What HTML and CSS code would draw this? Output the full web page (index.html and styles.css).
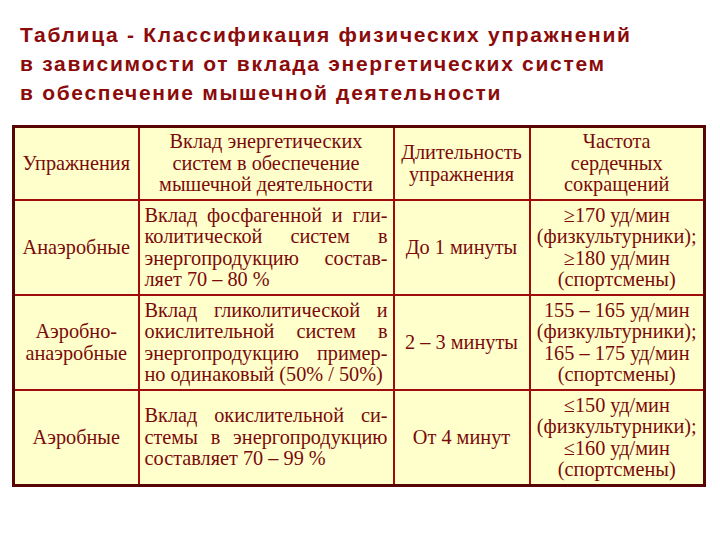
FILE: index.html
```html
<!DOCTYPE html>
<html lang="ru">
<head>
<meta charset="utf-8">
<link rel="stylesheet" href="styles.css">
</head>
<body>
<h1 class="title">Таблица - Классификация физических упражнений<br>в зависимости от вклада энергетических систем<br>в обеспечение мышечной деятельности</h1>
<table class="grid">
  <colgroup>
    <col class="c1"><col class="c2"><col class="c3"><col class="c4">
  </colgroup>
  <tr class="head">
    <td class="center">Упражнения</td>
    <td class="center">Вклад энергетических<br>систем в обеспечение<br>мышечной деятельности</td>
    <td class="center">Длительность<br>упражнения</td>
    <td class="center">Частота<br>сердечных<br>сокращений</td>
  </tr>
  <tr class="row">
    <td class="center">Анаэробные</td>
    <td class="just">
      <div class="ln">Вклад фосфагенной и гли-</div>
      <div class="ln">колитической систем в</div>
      <div class="ln">энергопродукцию состав-</div>
      <div class="ln last">ляет 70 – 80 %</div>
    </td>
    <td class="center">До 1 минуты</td>
    <td class="center">≥170 уд/мин<br>(физкультурники);<br>≥180 уд/мин<br>(спортсмены)</td>
  </tr>
  <tr class="row">
    <td class="center">Аэробно-<br>анаэробные</td>
    <td class="just">
      <div class="ln">Вклад гликолитической и</div>
      <div class="ln">окислительной систем в</div>
      <div class="ln">энергопродукцию пример-</div>
      <div class="ln last">но одинаковый (50% / 50%)</div>
    </td>
    <td class="center">2 – 3 минуты</td>
    <td class="center">155 – 165 уд/мин<br>(физкультурники);<br>165 – 175 уд/мин<br>(спортсмены)</td>
  </tr>
  <tr class="row">
    <td class="center">Аэробные</td>
    <td class="just">
      <div class="ln">Вклад окислительной си-</div>
      <div class="ln">стемы в энергопродукцию</div>
      <div class="ln last">составляет 70 – 99 %</div>
    </td>
    <td class="center">От 4 минут</td>
    <td class="center">≤150 уд/мин<br>(физкультурники);<br>≤160 уд/мин<br>(спортсмены)</td>
  </tr>
</table>
</body>
</html>
```
FILE: styles.css
```css
html, body {
  margin: 0;
  padding: 0;
  background: #ffffff;
}
body {
  width: 720px;
  height: 540px;
  overflow: hidden;
}
.title {
  margin: 0;
  padding: 20px 0 0 20px;
  font-family: "Liberation Sans", Arial, sans-serif;
  font-weight: bold;
  font-size: 21px;
  letter-spacing: 1.7px;
  line-height: 29px;
  color: #8b0a0a;
  height: 104px;
  box-sizing: border-box;
  white-space: nowrap;
}
.grid {
  margin: 21px 0 0 12px;
  border-collapse: collapse;
  table-layout: fixed;
  width: 691px;
  background: #ffffcc;
  border: 3px solid #5a0505;
  color: #7a0a0a;
}
.grid td {
  font-family: "Liberation Serif", "Times New Roman", Times, Tinos, "DejaVu Serif", serif;
  font-size: 20.3px;
  line-height: 21.4px;
  border: 2px solid #a00c0c;
  padding: 0 5px;
  vertical-align: middle;
}
.c1 { width: 125px; }
.c2 { width: 255px; }
.c3 { width: 136px; }
.c4 { width: 175px; }
.head td { height: 71px; }
.row td { height: 93px; }
.center { text-align: center; }
.just { text-align: justify; padding-left: 6px; padding-right: 6px; }
.ln { text-align: justify; text-align-last: justify; white-space: nowrap; }
.ln.last { text-align-last: left; }
```
